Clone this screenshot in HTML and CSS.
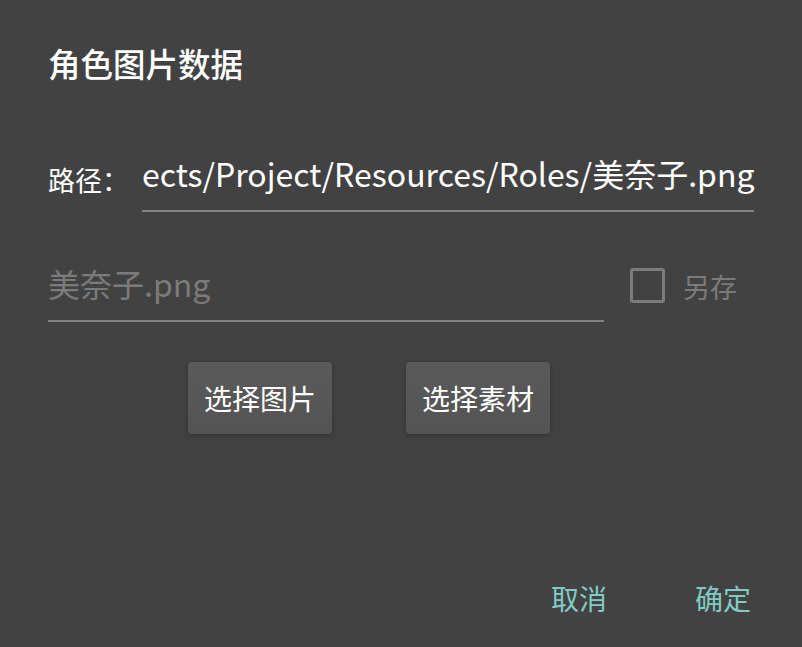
FILE: index.html
```html
<!DOCTYPE html>
<html lang="zh-CN">
<head>
<meta charset="utf-8">
<link rel="stylesheet" href="styles.css">
</head>
<body>
<div class="dialog">
  <div class="title">角色图片数据</div>
  <div class="row path-row">
    <span class="label">路径：</span>
    <div class="field path-field"><span class="path-text">ects/Project/Resources/Roles/美奈子.png</span></div>
  </div>
  <div class="row name-row">
    <div class="field name-field"><span class="hint">美奈子.png</span></div>
    <label class="check">
      <span class="box"></span>
      <span class="check-text">另存</span>
    </label>
  </div>
  <div class="row btn-row">
    <button class="raised">选择图片</button>
    <button class="raised">选择素材</button>
  </div>
  <div class="actions">
    <button class="flat">取消</button>
    <button class="flat">确定</button>
  </div>
</div>
</body>
</html>
```

FILE: styles.css
```css
html, body {
  margin: 0;
  padding: 0;
  background: #424242;
}
body {
  width: 802px;
  height: 647px;
  overflow: hidden;
  font-family: "Noto Sans CJK SC", "Noto Sans", sans-serif;
  color: #ffffff;
}
.dialog {
  display: flex;
  flex-direction: column;
  padding: 0 48px;
}
.title {
  margin-top: 41px;
  font-size: 32.5px;
  line-height: 44px;
  font-weight: 500;
}
.row {
  display: flex;
}
.path-row {
  margin-top: 67px;
  align-items: flex-end;
}
.label {
  font-size: 27px;
  line-height: 36px;
  width: 94px;
  margin-bottom: 14px;
}
.field {
  border-bottom: 2px solid #828282;
  white-space: nowrap;
  display: flex;
  align-items: flex-start;
  padding-top: 1px;
  height: 57px;
}
.path-field {
  width: 612px;
}
.path-text {
  font-size: 32px;
  line-height: 40px;
}
.name-row {
  margin-top: 50px;
  align-items: flex-start;
}
.name-field {
  width: 556px;
}
.hint {
  font-size: 32px;
  line-height: 40px;
  color: #7b7b7b;
}
.check {
  display: flex;
  align-items: center;
  margin-left: 26px;
  margin-top: 3px;
}
.box {
  width: 29px;
  height: 29px;
  border: 3px solid #7b7b7b;
  border-radius: 3px;
}
.check-text {
  margin-left: 18px;
  font-size: 27px;
  line-height: 36px;
  color: #7b7b7b;
  margin-top: 4px;
}
.btn-row {
  margin-top: 40px;
  padding-left: 140px;
  gap: 74px;
}
.raised {
  width: 144px;
  height: 72px;
  border: none;
  border-radius: 4px;
  background: linear-gradient(#5a5a5a, #545454);
  color: #ffffff;
  font-family: inherit;
  font-size: 28px;
  padding: 0;
  box-shadow: 0 1px 4px rgba(0,0,0,0.3);
}
.actions {
  display: flex;
  justify-content: flex-end;
  margin-top: 146px;
  margin-right: 3px;
  gap: 36px;
}
.flat {
  border: none;
  background: transparent;
  color: #80cbc4;
  font-family: inherit;
  font-size: 28px;
  line-height: 36px;
  padding: 0 26px;
  margin: 0;
}
.flat:last-child {
  padding-right: 0;
}
```
